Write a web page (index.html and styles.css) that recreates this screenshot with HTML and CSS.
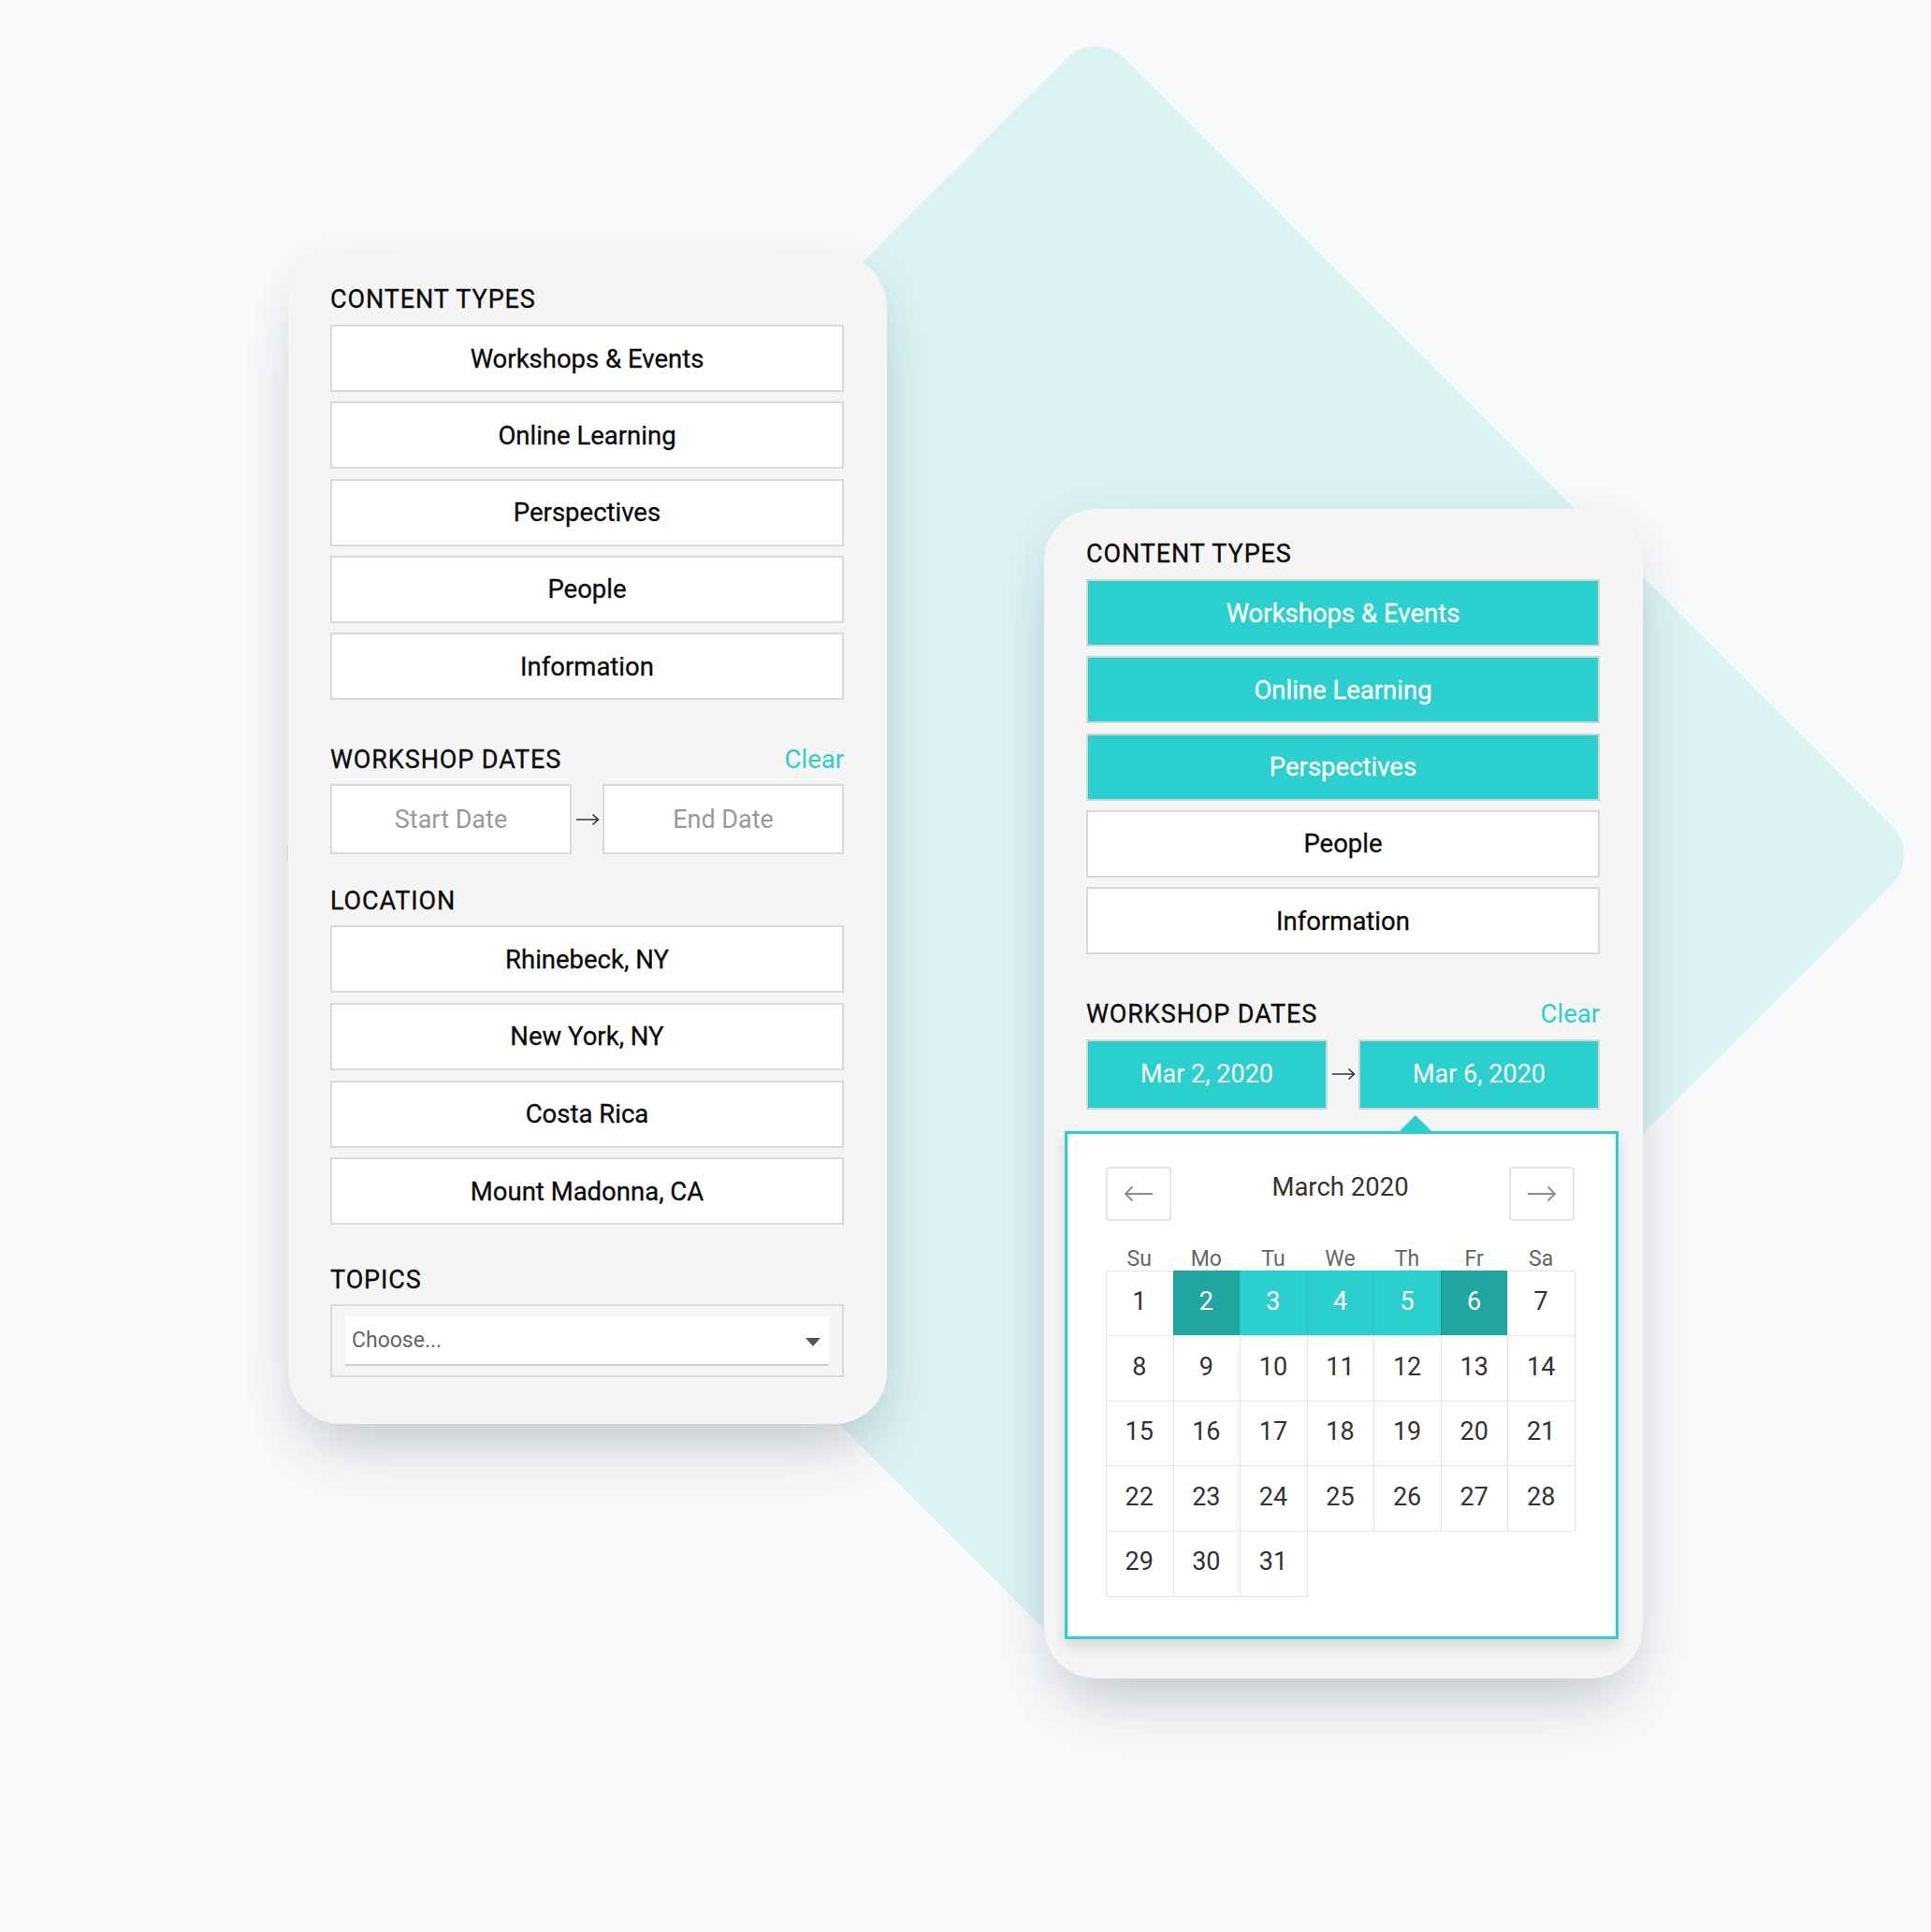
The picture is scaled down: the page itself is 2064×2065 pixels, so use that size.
FILE: index.html
```html
<!DOCTYPE html>
<html lang="en">
<head>
<meta charset="utf-8">
<title>Filters</title>
<link rel="stylesheet" href="styles.css">
</head>
<body>
<div class="stage">
  <div class="diamond"></div>
  <div class="cards">
    <section class="card">
      <div class="group">
        <div class="label">CONTENT TYPES</div>
        <div class="opts">
          <div class="opt">Workshops &amp; Events</div>
          <div class="opt">Online Learning</div>
          <div class="opt">Perspectives</div>
          <div class="opt">People</div>
          <div class="opt">Information</div>
        </div>
      </div>
      <div class="group g-dates">
        <div class="label-row"><span class="label">WORKSHOP DATES</span><span class="clear">Clear</span></div>
        <div class="dates">
          <div class="date placeholder">Start Date</div>
          <svg class="range-arrow" viewBox="0 0 26 14" width="26" height="14"><path d="M1 7H24.5M18.5 1.5L24.5 7L18.5 12.5" fill="none" stroke="#333" stroke-width="1.6"/></svg>
          <div class="date placeholder">End Date</div>
        </div>
      </div>
      <div class="group g-loc">
        <div class="label">LOCATION</div>
        <div class="opts opts-loc">
          <div class="opt">Rhinebeck, NY</div>
          <div class="opt">New York, NY</div>
          <div class="opt">Costa Rica</div>
          <div class="opt">Mount Madonna, CA</div>
        </div>
      </div>
      <div class="group g-topics">
        <div class="label">TOPICS</div>
        <div class="select">
          <div class="select-field">
            <span>Choose...</span>
            <span class="caret"></span>
          </div>
        </div>
      </div>
    </section>

    <section class="card card-right">
      <div class="group">
        <div class="label">CONTENT TYPES</div>
        <div class="opts">
          <div class="opt on">Workshops &amp; Events</div>
          <div class="opt on">Online Learning</div>
          <div class="opt on">Perspectives</div>
          <div class="opt">People</div>
          <div class="opt">Information</div>
        </div>
      </div>
      <div class="group g-dates-r">
        <div class="label-row"><span class="label">WORKSHOP DATES</span><span class="clear">Clear</span></div>
        <div class="dates">
          <div class="date on">Mar 2, 2020</div>
          <svg class="range-arrow" viewBox="0 0 26 14" width="26" height="14"><path d="M1 7H24.5M18.5 1.5L24.5 7L18.5 12.5" fill="none" stroke="#333" stroke-width="1.6"/></svg>
          <div class="date on">Mar 6, 2020</div>
        </div>
        <div class="calendar">
          <span class="pointer"></span>
          <div class="cal-head">
            <div class="nav"><svg viewBox="0 0 32 18" width="32" height="18"><path d="M31 9H2M9.5 1.5L2 9L9.5 16.5" fill="none" stroke="#8a8a8a" stroke-width="1.8"/></svg></div>
            <div class="cal-title">March 2020</div>
            <div class="nav"><svg viewBox="0 0 32 18" width="32" height="18"><path d="M1 9H30M22.5 1.5L30 9L22.5 16.5" fill="none" stroke="#8a8a8a" stroke-width="1.8"/></svg></div>
          </div>
          <div class="dow">
            <span>Su</span><span>Mo</span><span>Tu</span><span>We</span><span>Th</span><span>Fr</span><span>Sa</span>
          </div>
          <div class="grid">
            <div class="day">1</div>
            <div class="day end">2</div>
            <div class="day mid">3</div>
            <div class="day mid">4</div>
            <div class="day mid">5</div>
            <div class="day end">6</div>
            <div class="day">7</div>
            <div class="day">8</div>
            <div class="day">9</div>
            <div class="day">10</div>
            <div class="day">11</div>
            <div class="day">12</div>
            <div class="day">13</div>
            <div class="day">14</div>
            <div class="day">15</div>
            <div class="day">16</div>
            <div class="day">17</div>
            <div class="day">18</div>
            <div class="day">19</div>
            <div class="day">20</div>
            <div class="day">21</div>
            <div class="day">22</div>
            <div class="day">23</div>
            <div class="day">24</div>
            <div class="day">25</div>
            <div class="day">26</div>
            <div class="day">27</div>
            <div class="day">28</div>
            <div class="day">29</div>
            <div class="day">30</div>
            <div class="day">31</div>
          </div>
        </div>
      </div>
    </section>
  </div>
</div>
</body>
</html>
```

FILE: styles.css
```css
html, body {
  margin: 0;
  padding: 0;
  background: #f8f9fa;
}

body {
  font-family: Roboto, "Liberation Sans", Arial, sans-serif;
  color: #111;
}

.stage {
  position: relative;
  width: 2064px;
  height: 2065px;
  overflow: hidden;
  background: #f8f9fa;
}

.diamond {
  position: absolute;
  left: 547px;
  top: 290px;
  width: 1248px;
  height: 1248px;
  background: #dbf3f3;
  border-radius: 44px;
  transform: rotate(45deg);
}

.cards {
  position: relative;
  display: flex;
  align-items: flex-start;
  gap: 168px;
  padding: 272px 0 0 308px;
}

.card {
  width: 640px;
  box-sizing: border-box;
  padding: 32px 46px 50px 45px;
  background: #f5f5f5;
  border-radius: 56px;
  box-shadow: 0 40px 70px -24px rgba(40, 50, 70, 0.24), 0 8px 50px rgba(40, 60, 80, 0.07);
}

.card-right {
  margin-top: 272px;
  padding-bottom: 42px;
}

.label {
  display: block;
  font-size: 27px;
  line-height: 32px;
  font-weight: 400;
  letter-spacing: 0.9px;
  color: #0a0a0a;
  -webkit-text-stroke: 0.3px #0a0a0a;
}

.label-row {
  display: flex;
  justify-content: space-between;
  align-items: center;
  height: 32px;
}

.clear {
  font-size: 27.5px;
  line-height: 32px;
  color: #2ccfcd;
}

.g-dates { margin-top: 47.5px; }
.g-loc { margin-top: 34px; }
.g-topics { margin-top: 43px; }
.g-dates-r { margin-top: 48px; }

.opts {
  display: flex;
  flex-direction: column;
  gap: 10.3px;
  margin-top: 11px;
}

.opts-loc {
  margin-top: 10px;
  gap: 10.7px;
}

.opt {
  height: 72px;
  box-sizing: border-box;
  border: 2px solid #d9d9d9;
  background: #fff;
  display: flex;
  align-items: center;
  justify-content: center;
  font-size: 27.5px;
  font-weight: 400;
  color: #0a0a0a;
  -webkit-text-stroke: 0.3px #0a0a0a;
}

.opt.on {
  background: #2bcfcd;
  border-color: #cdd7d7;
  color: #fff;
  -webkit-text-stroke: 0.3px #fff;
}

.dates {
  display: grid;
  grid-template-columns: 1fr 33px 1fr;
  align-items: center;
  margin-top: 10.5px;
}

.date {
  height: 75px;
  box-sizing: border-box;
  border: 2px solid #d9d9d9;
  background: #fff;
  display: flex;
  align-items: center;
  justify-content: center;
  font-size: 27px;
  color: #111;
}

.date.placeholder {
  color: #9a9a9a;
}

.date.on {
  background: #2bcfcd;
  border-color: #cdd7d7;
  color: #fff;
}

.range-arrow {
  display: block;
  justify-self: center;
}

.select {
  margin-top: 10px;
  height: 78px;
  box-sizing: border-box;
  border: 2px solid #dadada;
  padding: 11px 14px 12px;
}

.select-field {
  height: 51px;
  background: #fff;
  border-bottom: 2px solid #cfcfcf;
  display: flex;
  align-items: center;
  justify-content: space-between;
  padding: 0 9px 0 7px;
  font-size: 23px;
  color: #666;
}

.caret {
  width: 0;
  height: 0;
  border-left: 8.5px solid transparent;
  border-right: 8.5px solid transparent;
  border-top: 9px solid #555;
  margin-top: 3px;
}

.calendar {
  position: relative;
  margin: 23px -20px 0 -23px;
  border: 3px solid #2bcfcd;
  background: #fff;
  padding: 35px 44px 43px 41px;
  box-shadow: 0 8px 14px rgba(0, 0, 0, 0.12);
}

.pointer {
  position: absolute;
  top: -20px;
  left: 355px;
  width: 0;
  height: 0;
  border-left: 17px solid transparent;
  border-right: 17px solid transparent;
  border-bottom: 17px solid #2bcfcd;
}

.cal-head {
  display: flex;
  align-items: center;
  justify-content: space-between;
  height: 58px;
}

.nav {
  width: 70px;
  height: 58px;
  box-sizing: border-box;
  border: 2px solid #e6e6e6;
  border-radius: 4px;
  display: flex;
  align-items: center;
  justify-content: center;
}

.cal-title {
  font-size: 27.5px;
  color: #333;
  margin-top: -14px;
}

.dow {
  display: grid;
  grid-template-columns: repeat(7, 1fr);
  margin-top: 29px;
  height: 24px;
  line-height: 24px;
  font-size: 23px;
  color: #666;
  text-align: center;
}

.grid {
  display: grid;
  grid-template-columns: repeat(7, 1fr);
  grid-auto-rows: 69.6px;
}

.day {
  display: flex;
  align-items: center;
  justify-content: center;
  font-size: 27px;
  color: #333;
  background: #fff;
  padding-bottom: 3px;
  box-sizing: border-box;
  box-shadow: inset 1px 1px 0 #e4e6e6, 1px 0 0 #e4e6e6, 0 1px 0 #e4e6e6, 1px 1px 0 #e4e6e6;
}

.day.mid {
  background: #2bcfcd;
  color: #fff;
  box-shadow: inset 1px 0 0 rgba(0, 0, 0, 0.06);
}

.day.end {
  background: #21a5a1;
  color: #fff;
  box-shadow: inset 1px 0 0 rgba(0, 0, 0, 0.08);
}
```
